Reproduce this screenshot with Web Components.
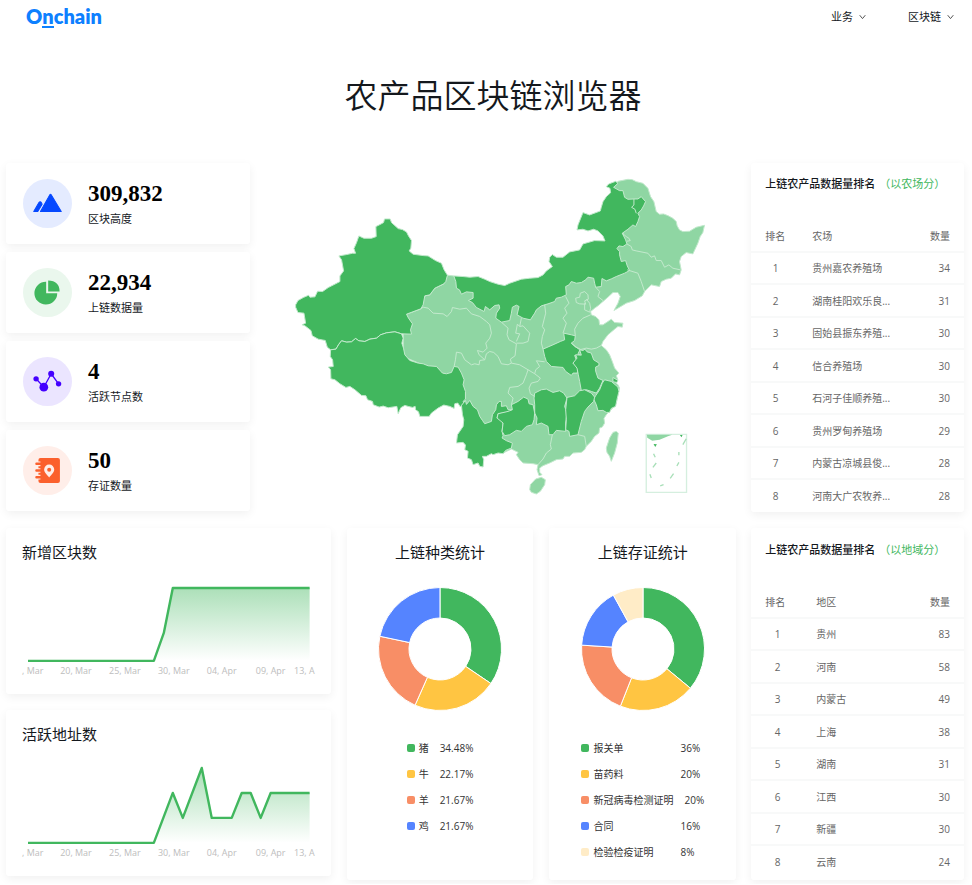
<!DOCTYPE html>
<html lang="zh-CN">
<head>
<meta charset="utf-8">
<meta name="viewport" content="width=device-width, initial-scale=1">
<title>农产品区块链浏览器</title>
<style>
  body { margin: 0; background: #fff; color: #14181d; font-family: "Open Sans", "Noto Sans CJK SC", sans-serif; font-size: 11px; }
</style>
</head>
<body>
<explorer-page></explorer-page>
<script>
const define = (name, html, setup) => {
  const tpl = document.createElement('template');
  tpl.innerHTML = html;
  customElements.define(name, class extends HTMLElement {
    constructor() {
      super();
      this.attachShadow({ mode: 'open' }).append(tpl.content.cloneNode(true));
    }
    connectedCallback() { if (setup) setup(this, this.shadowRoot); }
  });
};

define('site-header', `
<style>
  :host { display: flex; justify-content: space-between; align-items: center; height: 34px; padding: 0 18px 0 26px; }
  a { color: #0d80ff; text-decoration: none; font: 800 20px/20px Lato, sans-serif; }
  a span { display: inline-block; line-height: 20px; border-bottom: 2px solid #0d80ff; }
  nav { display: flex; gap: 42px; }
  button { display: flex; align-items: center; gap: 6px; padding: 0; border: 0; background: none; font: inherit; line-height: 16px; color: #14181d; }
</style>
<a href="#">O<span>n</span>chain</a>
<nav>
  <button type="button">业务<svg width="7" height="6" viewBox="0 0 7 6" aria-hidden="true"><path d="M.7 1.2 3.5 4.6 6.3 1.2" fill="none" stroke="#555"/></svg></button>
  <button type="button">区块链<svg width="7" height="6" viewBox="0 0 7 6" aria-hidden="true"><path d="M.7 1.2 3.5 4.6 6.3 1.2" fill="none" stroke="#555"/></svg></button>
</nav>`);

define('panel-card', `
<style>
  :host { display: block; background: #fff; border-radius: 3px; box-shadow: 0 3px 10px rgba(0,0,0,.06); }
</style>
<slot></slot>`);

define('stat-card', `
<style>
  panel-card { display: block; }
  :host { display: block; }
  .row { display: flex; align-items: center; gap: 16px; height: 49px; padding: 16px 17px; }
  ::slotted(svg) { width: 49px; height: 49px; }
  strong { display: block; font: 700 23px/30px "Liberation Serif", serif; color: #000; }
  span { display: block; line-height: 20px; }
</style>
<panel-card><div class="row"><slot></slot><div><strong></strong><span></span></div></div></panel-card>`,
(el, root) => {
  root.querySelector('strong').textContent = el.getAttribute('value');
  root.querySelector('span').textContent = el.getAttribute('label');
});

define('china-map', `
<style>
  :host { display: block; }
  svg { display: block; width: 100%; height: auto; }
  .l { fill: #8fd6a3; } .d { fill: #41b75e; }
  .l, .d, .b { stroke: #c3e9cd; stroke-width: 3; stroke-linejoin: round; }
  .b { fill: none; }
</style>
<svg viewBox="-120 -21 1461 1044" role="img" aria-label="中国地图">
<path class="l" d="M473 316 492 318 600 400 900 300 1000 200 1005 80 972 52 985 34 1000 31 1015 28 1028 29 1040 35 1060 40 1075 55 1083 80 1093 95 1100 125 1110 133 1122 132 1135 137 1150 145 1160 155 1163 168 1170 180 1180 185 1200 184 1220 172 1245 166 1240 188 1232 200 1225 220 1210 252 1190 248 1175 260 1170 275 1175 300 1170 315 1158 312 1145 325 1130 328 1115 335 1110 350 1085 345 1065 365 1058 378 1035 392 1010 400 990 412 973 422 985 400 992 380 985 368 970 368 955 382 940 395 925 408 915 415 903 425 905 435 918 440 928 450 930 465 940 465 955 455 965 448 975 458 1000 460 998 472 985 470 975 478 955 495 940 515 935 527 950 540 960 555 968 575 975 595 988 610 980 618 985 630 975 635 985 645 990 655 985 675 980 700 965 720 950 735 943 746 945 760 938 772 930 775 928 790 915 800 905 815 890 830 885 840 875 848 850 850 840 860 825 860 820 868 800 870 780 880 760 888 750 895 750 908 757 915 748 918 742 900 745 885 730 882 700 880 690 870 680 855 685 848 665 838 640 850 560 780 520 700 480 620 340 560 340 480 350 433 393 417 405 378 420 375 435 355 462 342Z"/>
<path class="l" d="M738 928 755 923 767 930 765 945 752 965 740 973 725 968 720 960 722 945Z"/>
<path class="l" d="M980 785 986 790 983 820 975 850 965 875 960 860 952 848 950 835 960 805 970 788Z"/>
<path class="d" d="M17 405 24 392 40 383 56 376 60 382 75 381 83 364 98 365 115 353 125 348 150 335 150 318 156 310 161 303 155 270 147 258 170 254 188 250 197 250 192 236 200 218 207 198 222 205 245 205 259 200 258 170 270 164 281 158 284 147 301 147 305 158 325 176 338 179 350 186 356 198 365 212 363 235 358 243 370 253 400 257 415 258 437 272 455 280 463 300 473 316 468 335 462 342 435 355 420 375 405 378 400 405 393 417 350 433 356 445 368 462 362 480 365 493 335 492 315 486 290 489 272 495 260 505 240 508 225 515 207 513 197 506 185 516 170 517 155 513 147 523 138 538 122 540 112 532 106 512 85 508 67 498 63 482 45 468 36 465 47 460 42 430 24 428 17 412Z"/>
<path class="d" d="M122 540 138 538 147 523 155 513 170 517 185 516 197 506 207 513 225 515 240 508 260 505 272 495 290 489 315 486 335 492 340 505 336 520 341 535 345 555 360 572 385 580 400 582 415 588 440 590 458 610 470 612 485 608 493 590 505 592 515 610 523 630 520 645 527 665 527 688 520 695 524 705 515 707 512 712 504 700 495 702 493 716 480 710 462 706 445 715 425 730 418 740 390 740 386 726 377 720 376 710 368 713 355 710 345 707 333 714 325 732 321 710 295 714 280 709 268 712 250 705 248 695 233 690 228 678 215 677 195 660 180 650 168 653 150 642 135 630 123 627 122 600 115 592 130 590 128 570 121 560Z"/>
<path class="d" d="M492 318 520 320 540 322 565 320 585 328 600 335 625 343 645 347 660 340 695 328 720 325 745 323 760 315 770 303 788 290 778 275 780 262 788 254 800 262 820 262 840 246 870 240 880 222 915 212 946 213 940 198 925 183 912 178 895 183 880 178 862 180 865 165 880 128 900 135 932 123 935 112 940 95 950 80 963 68 961 55 950 50 957 42 978 34 985 40 972 52 990 62 1000 62 1005 82 1015 88 1033 87 1045 87 1055 80 1068 95 1062 108 1055 120 1045 130 1050 140 1045 155 1038 170 1030 165 1015 178 998 190 1008 210 1012 222 1000 230 988 228 982 236 990 245 990 255 995 275 1008 272 1013 288 1020 302 1005 310 980 320 965 327 950 333 945 330 937 326 935 350 918 352 915 340 912 325 895 322 888 330 875 338 860 340 845 335 838 345 828 350 830 375 815 382 800 385 795 395 775 402 755 408 740 420 735 430 722 450 700 445 682 435 688 410 680 406 668 412 665 430 660 452 635 457 618 445 620 430 630 415 628 405 615 407 600 420 587 410 583 425 560 413 548 398 536 392 550 385 550 368 530 366 515 373 509 360 500 355 498 335Z"/>
<path class="d" d="M760 538 790 525 812 515 825 510 822 490 845 495 857 498 855 512 845 520 858 532 872 538 865 552 870 555 855 557 860 570 850 580 865 592 863 610 850 610 845 617 828 605 820 593 785 590 770 575 765 560Z"/>
<path class="d" d="M870 540 880 542 886 538 892 546 905 550 912 570 928 580 928 587 918 592 918 604 925 625 940 632 930 655 920 670 905 665 890 660 875 663 870 635 866 615 862 595 850 580 862 565 858 555 875 556Z"/>
<path class="d" d="M918 678 930 660 938 640 945 630 965 635 985 652 988 665 982 690 978 710 965 716 960 728 950 728 940 722 925 723 920 705 912 688ZM970 623 985 632 982 638 970 636Z"/>
<path class="d" d="M735 670 755 660 770 658 790 668 810 663 822 670 832 685 825 710 832 730 828 760 828 785 800 782 790 795 778 795 775 770 755 760 740 765 742 745 735 730 735 705 733 685Z"/>
<path class="d" d="M832 683 855 678 870 663 885 660 905 670 915 682 912 695 895 712 885 725 875 755 865 795 840 800 838 785 828 780 830 750 828 720Z"/>
<path class="d" d="M515 707 527 692 530 704 540 692 550 710 563 720 570 740 578 752 585 762 605 755 608 735 618 720 620 705 628 695 635 695 635 710 650 708 655 720 668 720 655 728 625 732 622 745 635 748 640 760 637 785 640 798 637 805 650 813 668 820 665 835 648 842 640 852 625 850 610 855 605 852 590 860 578 860 582 870 580 892 570 890 565 880 550 885 545 870 533 865 535 845 525 840 527 826 520 818 500 820 503 795 520 770 522 750 518 735Z"/>
<path class="d" d="M625 732 655 725 668 720 665 705 685 695 702 682 715 688 718 702 730 705 735 730 733 750 728 765 710 770 695 785 680 782 660 795 645 798 637 785 640 760 622 745Z"/>
<path class="b" d="M393 417 400 412 415 415 430 430 460 432 472 440 485 425 488 413 510 418 530 415 545 432 570 440 590 455 600 465 605 490 600 505 588 520 592 535 580 547 563 542 568 555 585 570 570 572 568 585 555 582 545 585 525 570 515 550 500 547 497 570 493 590"/>
<path class="b" d="M585 570 590 552 600 545 612 548 625 560 635 582 655 585 665 580 690 585 715 600 710 615 700 640 685 650 660 653 655 670 670 685 665 705M715 600 735 612 752 625 745 635 725 640 718 655 722 672 735 680M765 576 740 573 750 590 738 600 735 612M665 580 662 568 676 558 680 522 658 510 652 495 655 475 635 457M695 445 690 470 683 463 678 490 690 492 680 515M690 470 700 468 720 490 715 515 700 520 680 520"/>
<path class="b" d="M765 405 768 430 758 470 765 480 758 500 755 520 760 538M828 380 838 400 825 415 832 430 820 445 830 460 820 490M903 435 880 445 865 460 855 478 857 498M858 385 870 382 872 370 885 365 895 375 896 388 885 393 888 403 870 402 860 398ZM890 388 900 400 903 415 900 427 885 420 885 400M918 352 930 365 925 380 940 392M845 520 870 540 890 535 905 538 920 535 935 527"/>
<path class="b" d="M1013 300 1045 310 1055 335 1065 365M1012 222 1025 230 1028 240 1040 243 1075 250 1085 262 1095 258 1100 272 1115 272 1125 292 1138 285 1150 295 1173 300M1033 87 1033 105 1026 112 1036 118 1040 130M998 190 1010 200 1018 205 1022 212 1012 214M788 795 782 825 785 838 770 850 760 868 745 885M865 795 885 800 890 830"/>
<path d="M1070 794H1191V968H1070Z" fill="none" stroke="#d5efdf" stroke-width="4"/>
<path d="M1072 795 1148 795 1135 800 1110 810 1088 813 1073 804Z" fill="#8fd6a3"/>
<path d="M1171 796 1179 796 1176 803ZM1092 823 1102 824 1097 832Z" fill="#41b75e"/>
<path d="M1190 807 1180 825M1168 847V857M1168 878 1162 889M1152 912 1142 926M1122 945 1112 949M1085 925 1081 914M1090 893 1100 880M1097 863 1092 852" fill="none" stroke="#a8dfb8" stroke-width="4"/>
</svg>`);

define('trend-chart', `
<style>
  :host { display: block; }
  .body { padding: 16px 16px 14px; }
  h2 { margin: 0; font-size: 15px; line-height: 16px; font-weight: 400; }
  svg { display: block; width: 100%; height: auto; margin-top: 10px; overflow: visible; }
  text { font-size: 9px; fill: #bdbdbd; text-anchor: middle; }
  .first { text-anchor: start; }
  .last { text-anchor: end; }
</style>
<panel-card><div class="body">
<h2></h2>
<svg viewBox="0 0 293 110" role="img">
<defs><linearGradient id="fade" gradientUnits="userSpaceOnUse" x1="0" y1="16" x2="0" y2="91"><stop offset="0" stop-color="#41b75e" stop-opacity=".45"/><stop offset="1" stop-color="#41b75e" stop-opacity="0"/></linearGradient></defs>
<path class="area" fill="url(#fade)"/><path class="line" fill="none" stroke="#41b75e" stroke-width="2.4" stroke-linejoin="round"/>
<text class="first" x="0" y="104">, Mar</text><text x="54" y="104">20, Mar</text><text x="103" y="104">25, Mar</text><text x="152" y="104">30, Mar</text><text x="200" y="104">04, Apr</text><text x="249" y="104">09, Apr</text><text class="last" x="293" y="104">13, A</text>
</svg></div></panel-card>`,
(el, root) => {
  const points = el.getAttribute('points');
  root.querySelector('h2').textContent = el.getAttribute('heading');
  root.querySelector('.line').setAttribute('d', 'M' + points);
  root.querySelector('.area').setAttribute('d', 'M' + points + ' 288 91Z');
});

define('donut-chart', `
<style>
  :host { display: block; }
  panel-card { height: 100%; }
  .body { display: flex; flex-direction: column; align-items: center; padding: 16px 8px 15px; }
  h2 { margin: 0; font-size: 15px; line-height: 16px; font-weight: 400; }
  svg { width: 124px; height: 124px; margin: 27px 0 24px; }
  ul { margin: 0; padding: 0; list-style: none; font-size: 10px; line-height: 26px; color: #333; }
  li { display: flex; align-items: center; }
  i { width: 8px; height: 8px; border-radius: 2px; margin-right: 4px; }
  b { font-weight: 400; margin-right: 11px; min-width: var(--label, 0); }
</style>
<panel-card><div class="body"><h2></h2><svg viewBox="-62 -62 124 124" role="img"></svg><ul></ul></div></panel-card>`,
(el, root) => {
  const colors = ['#41b75e', '#ffc542', '#f88e66', '#5584ff', '#ffecc7'];
  const svg = root.querySelector('svg'), list = root.querySelector('ul');
  root.querySelector('h2').textContent = el.getAttribute('heading');
  const at = (r, t) => (r * Math.sin(t * 2 * Math.PI)).toFixed(2) + ' ' + (-r * Math.cos(t * 2 * Math.PI)).toFixed(2);
  let start = 0;
  el.getAttribute('data').split(',').forEach((entry, i) => {
    const [label, value] = entry.split(':');
    const end = start + parseFloat(value) / 100;
    const path = document.createElementNS('http://www.w3.org/2000/svg', 'path');
    path.setAttribute('d', `M${at(61.5, start)}A61.5 61.5 0 0 1 ${at(61.5, end)}L${at(31, end)}A31 31 0 0 0 ${at(31, start)}Z`);
    path.setAttribute('fill', colors[i]);
    path.setAttribute('stroke', '#fff');
    svg.append(path);
    start = end;
    const li = document.createElement('li');
    li.innerHTML = `<i style="background:${colors[i]}"></i><b>${label}</b><span>${value}</span>`;
    list.append(li);
  });
});

define('rank-table', `
<style>
  :host { display: block; }
  panel-card { height: 100%; }
  h2 { margin: 0; padding: var(--top, 13px) 0 28px 14px; font-size: 11px; line-height: 16px; font-weight: 500; white-space: nowrap; }
  h2 span { margin-left: 4px; color: #41b75e; font-weight: 400; }
  table { width: 100%; border-collapse: collapse; table-layout: fixed; font-size: 10px; line-height: 16px; color: #666; }
  th, td { height: 32px; padding: 0; font-weight: 400; text-align: left; white-space: nowrap; box-sizing: border-box; }
  tbody tr:nth-child(even) td { height: 33px; }
  tbody td { border-top: 2px solid #f8f9f9; }
  th:first-child, td:first-child { width: var(--first, 61px); padding: 0 26px 0 14px; }
  td:first-child { text-align: center; }
  th:last-child, td:last-child { width: 50px; padding-right: 14px; text-align: right; }
</style>
<panel-card><h2>上链农产品数据量排名<span></span></h2>
<table><thead><tr><th scope="col">排名</th><th scope="col"></th><th scope="col">数量</th></tr></thead><tbody></tbody></table></panel-card>`,
(el, root) => {
  root.querySelector('h2 span').textContent = el.getAttribute('note');
  root.querySelectorAll('th')[1].textContent = el.getAttribute('column');
  root.querySelector('tbody').innerHTML = el.getAttribute('rows').split(',').map((row, i) => {
    const [name, count] = row.split(':');
    return `<tr><td>${i + 1}</td><td>${name}</td><td>${count}</td></tr>`;
  }).join('');
});

define('explorer-page', `
<style>
  :host { display: block; }
  h1 { margin: 36px 0 45px; padding-left: 14px; text-align: center; font-family: "Noto Sans CJK SC", sans-serif; font-size: 33px; line-height: 48px; font-weight: 350; }
  main { display: grid; grid-template-columns: minmax(0, 731fr) minmax(212px, 213fr); gap: 16px 15px; padding: 0 8px 4px 6px; }
  .overview { display: grid; grid-template-columns: minmax(0, 244fr) minmax(0, 487fr); align-items: start; }
  .stats { display: grid; gap: 8px; }
  .charts { display: grid; grid-template-columns: minmax(0, 325fr) minmax(0, 187fr) minmax(0, 187fr); gap: 16px; }
  .trends { display: flex; flex-direction: column; gap: 16px; }
  .evidence { --label: 76px; }
  .regions { --first: 65px; --top: 14px; }
</style>
<site-header></site-header>
<h1>农产品区块链浏览器</h1>
<main>
  <section class="overview">
    <div class="stats">
      <stat-card value="309,832" label="区块高度"><svg viewBox="0 0 146 146" aria-hidden="true"><circle cx="73" cy="73" r="73" fill="#e4ebff"/><path d="M84 47 114 97H52L80 47Q82 44 84 47Z" fill="#0548ff" stroke="#0548ff" stroke-width="3" stroke-linejoin="round"/><path d="M32 97 47 71Q51 65 55 71L57 75 44 97Z" fill="#0548ff" stroke="#0548ff" stroke-width="3" stroke-linejoin="round"/></svg></stat-card>
      <stat-card value="22,934" label="上链数据量"><svg viewBox="0 0 146 146" aria-hidden="true"><circle cx="73" cy="73" r="73" fill="#eaf7ed"/><path d="M69 41V75H102A34 34 0 1 1 69 41ZM75 37Q109 38 109 70H75Z" fill="#41b75e"/></svg></stat-card>
      <stat-card value="4" label="活跃节点数"><svg viewBox="0 0 146 146" aria-hidden="true"><circle cx="73" cy="73" r="73" fill="#ebe5ff"/><path d="M39 65 62 90 84 50 106 80" fill="none" stroke="#4400ff" stroke-width="4"/><g fill="#4400ff"><circle cx="39" cy="65" r="8"/><circle cx="62" cy="90" r="13"/><circle cx="84" cy="50" r="9"/><circle cx="106" cy="80" r="8"/></g></svg></stat-card>
      <stat-card value="50" label="存证数量"><svg viewBox="0 0 146 146" aria-hidden="true"><circle cx="73" cy="73" r="73" fill="#ffeee9"/><rect x="46" y="36" width="64" height="74" rx="6" fill="#fb602d"/><path d="M41 53H52M41 73H52M41 93H52" stroke="#ffeee9" stroke-width="14" stroke-linecap="round"/><path d="M40 53H56M40 73H56M40 93H56" stroke="#fb602d" stroke-width="7" stroke-linecap="round"/><path d="M52 42H62V104H52Z" fill="#fb602d"/><path d="M78 94C73 86 63 80 63 70A15 15 0 0 1 93 70C93 80 83 86 78 94Z" fill="#ffeee9"/><circle cx="78" cy="71" r="6" fill="#fb602d"/></svg></stat-card>
    </div>
    <china-map></china-map>
  </section>
  <rank-table note="（以农场分）" column="农场" rows="贵州嘉农养殖场:34,湖南桂阳欢乐良...:31,固始县振东养殖...:30,信合养殖场:30,石河子佳顺养殖...:30,贵州罗甸养殖场:29,内蒙古凉城县俊...:28,河南大广农牧养...:28"></rank-table>
  <section class="charts">
    <div class="trends">
      <trend-chart heading="新增区块数" points="6 91 132 91 142 63 151 18 288 18"></trend-chart>
      <trend-chart heading="活跃地址数" points="6 91 132 91 151 41 161 66 180 16 190 66 210 66 220 41 229 41 239 66 249 41 288 41"></trend-chart>
    </div>
    <donut-chart heading="上链种类统计" data="猪:34.48%,牛:22.17%,羊:21.67%,鸡:21.67%"></donut-chart>
    <donut-chart class="evidence" heading="上链存证统计" data="报关单:36%,苗药料:20%,新冠病毒检测证明:20%,合同:16%,检验检疫证明:8%"></donut-chart>
  </section>
  <rank-table class="regions" note="（以地域分）" column="地区" rows="贵州:83,河南:58,内蒙古:49,上海:38,湖南:31,江西:30,新疆:30,云南:24"></rank-table>
</main>`);
</script>
</body>
</html>
